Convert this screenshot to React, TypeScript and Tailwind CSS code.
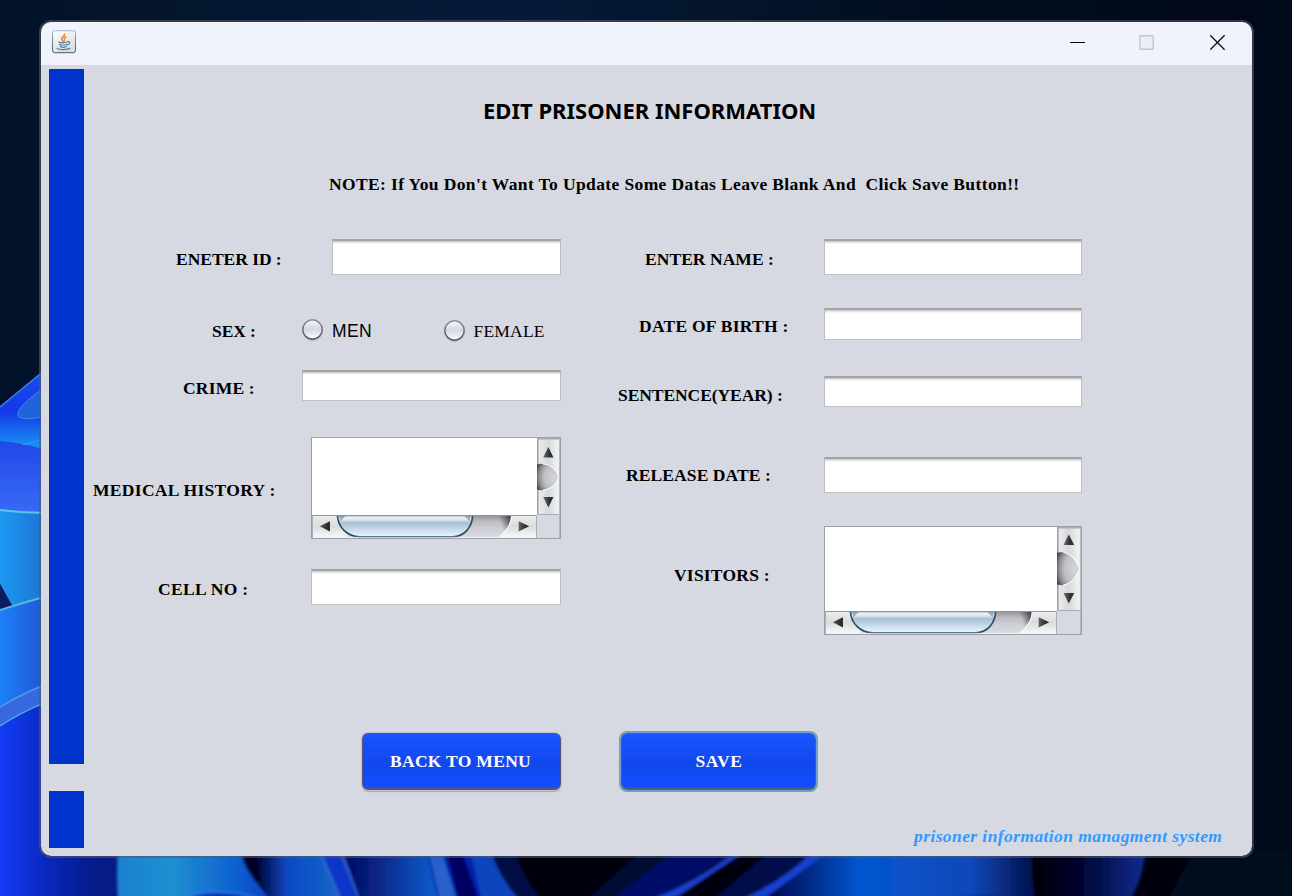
import { useId } from "react";
import clsx from "clsx";

const serif = "font-['Liberation_Serif',serif]";

function Wallpaper() {
  return (
    <svg className="absolute inset-0 h-[896px] w-[1292px]" viewBox="0 0 1292 896" aria-hidden="true">
      <defs>
        <filter id="soft" x="-5%" y="-5%" width="110%" height="110%">
          <feGaussianBlur stdDeviation="1.6" />
        </filter>
        <linearGradient id="sky" x1="0" y1="0" x2="1" y2="0">
          <stop offset="0" stopColor="#02112a" />
          <stop offset="0.08" stopColor="#04142c" />
          <stop offset="0.4" stopColor="#061a38" />
          <stop offset="0.75" stopColor="#010d1d" />
          <stop offset="1" stopColor="#01081a" />
        </linearGradient>
        <linearGradient id="petalA" x1="0" y1="0" x2="0" y2="1">
          <stop offset="0" stopColor="#1c50e8" />
          <stop offset="0.5" stopColor="#1436e8" />
          <stop offset="1" stopColor="#1a9af4" />
        </linearGradient>
        <linearGradient id="petalB" x1="0" y1="0" x2="0" y2="1">
          <stop offset="0" stopColor="#2048e8" />
          <stop offset="1" stopColor="#3a6af6" />
        </linearGradient>
        <linearGradient id="petalC" x1="0" y1="0" x2="1" y2="0">
          <stop offset="0" stopColor="#1c9af4" />
          <stop offset="1" stopColor="#1c74d0" />
        </linearGradient>
        <linearGradient id="petalD" x1="0" y1="0" x2="1" y2="0">
          <stop offset="0" stopColor="#1c80fa" />
          <stop offset="1" stopColor="#2058d0" />
        </linearGradient>
        <linearGradient id="petalE" x1="0" y1="0" x2="1" y2="0">
          <stop offset="0" stopColor="#143cf8" />
          <stop offset="0.3" stopColor="#0a28c0" />
          <stop offset="0.6" stopColor="#051c8c" />
          <stop offset="1" stopColor="#041878" />
        </linearGradient>
        <linearGradient id="b1" x1="0" y1="0" x2="1" y2="0">
          <stop offset="0" stopColor="#1e80d0" />
          <stop offset="0.35" stopColor="#1f90d0" />
          <stop offset="0.8" stopColor="#0c5cd0" />
          <stop offset="1" stopColor="#083cc0" />
        </linearGradient>
        <linearGradient id="b2" x1="0" y1="0" x2="1" y2="0">
          <stop offset="0" stopColor="#02083c" />
          <stop offset="0.35" stopColor="#0c48c4" />
          <stop offset="1" stopColor="#1468c8" />
        </linearGradient>
        <linearGradient id="b3" x1="0" y1="0" x2="1" y2="0">
          <stop offset="0" stopColor="#03055c" />
          <stop offset="1" stopColor="#1060d0" />
        </linearGradient>
        <linearGradient id="b4" x1="0" y1="0" x2="1" y2="0">
          <stop offset="0" stopColor="#020244" />
          <stop offset="0.35" stopColor="#0456d0" />
          <stop offset="0.75" stopColor="#0c48b8" />
          <stop offset="1" stopColor="#02083c" />
        </linearGradient>
        <linearGradient id="b5" x1="0" y1="0" x2="1" y2="0">
          <stop offset="0" stopColor="#000008" />
          <stop offset="0.4" stopColor="#01022c" />
          <stop offset="1" stopColor="#0c2c90" />
        </linearGradient>
      </defs>
      <rect width="1292" height="896" fill="url(#sky)" />
      <rect x="1250" y="0" width="42" height="896" fill="#010a1a" />

      <path d="M0 407Q24 387 44 371V450H0Z" fill="url(#petalA)" />
      <path d="M0 407Q24 387 44 371" fill="none" stroke="#3a88e8" strokeWidth="1.5" />
      <path d="M44 388Q12 410 19 417Q28 421 44 416Z" fill="#2064dc" stroke="#4088f0" />
      <path d="M0 441Q22 443 44 449V514H0Z" fill="url(#petalB)" />
      <path d="M22 445Q32 443 44 439" fill="none" stroke="#3c98e8" />
      <path d="M0 510Q22 513 44 513V600L12 606L0 584Z" fill="url(#petalC)" />
      <path d="M0 510Q22 513 44 513" fill="none" stroke="#58c8f0" strokeWidth="2" />
      <path d="M0 584L13 607L0 611Z" fill="#0c1c60" />
      <path d="M0 610Q22 603 44 597V688L0 709Z" fill="url(#petalD)" />
      <path d="M0 610Q22 603 44 597" fill="none" stroke="#50b8e8" strokeWidth="2" />
      <path d="M0 706Q20 694 44 685V704Q20 714 0 727Z" fill="#3868e0" />
      <path d="M0 707Q20 695 44 685M0 726Q20 713 44 703" fill="none" stroke="#48a0e8" strokeWidth="1.5" />
      <path d="M0 727Q20 714 44 704V856H150V896H0Z" fill="url(#petalE)" />

      <g filter="url(#soft)">
        <path d="M118 850H242Q240 868 272 900H118Q116 872 118 850Z" fill="url(#b1)" />
        <path d="M240 850H330V900H272Q246 874 240 850Z" fill="#010528" />
        <path d="M258 850H322L342 900H270Q256 876 258 850Z" fill="url(#b2)" />
        <path d="M180 900Q215 884 264 900Z" fill="#0830b8" stroke="#2c80ec" strokeWidth="1.5" />
        <path d="M319 850H341L360 900H340Z" fill="#1034c8" />
        <path d="M319 850L341 900M340 850L360 900" fill="none" stroke="#2c68d0" strokeWidth="2.5" />
        <path d="M342 850H428L440 900H360Z" fill="url(#b3)" />
        <path d="M426 850H516Q522 872 540 900H438Z" fill="#0620b0" />
        <path d="M428 850H441L457 900H440Z" fill="#2c60cc" />
        <path d="M446 850H462L479 900H458Z" fill="#030664" />
        <path d="M470 850H490Q500 878 519 900H482Z" fill="#1144bc" />
        <path d="M490 850H516Q522 872 542 900H519Q500 878 490 850Z" fill="#030a44" />
        <path d="M514 850H720V900H542Q522 876 514 850Z" fill="#000008" />
        <path d="M640 852H675L613 900H586Z" fill="#020730" />
        <path d="M675 852H735L656 900H611Z" fill="#031068" />
        <path d="M735 852Q700 880 650 900H672Q712 882 744 852Z" fill="#1a40d0" />
        <path d="M744 852H814L760 900H672Z" fill="#01010c" />
        <path d="M770 852H812L762 900H712Z" fill="#020a48" />
        <path d="M812 852Q785 880 740 900H766L828 852Z" fill="#1840d0" />
        <path d="M828 852H1034Q1030 880 1042 900H762Z" fill="url(#b4)" />
        <path d="M1032 850H1145Q1143 876 1130 900H1036Q1030 880 1032 850Z" fill="url(#b5)" />
        <path d="M940 900Q1000 890 1040 900Z" fill="#0c24a0" />
        <path d="M1145 850H1196L1168 900H1130Q1144 876 1145 850Z" fill="#010010" />
        <path d="M1194 850H1300V900H1168Z" fill="#020d1c" />
      </g>
    </svg>
  );
}

function JavaIcon() {
  return (
    <svg className="h-6 w-6" viewBox="0 0 24 24" aria-hidden="true">
      <defs>
        <linearGradient id="javaBg" x1="0" y1="0" x2="0.4" y2="1">
          <stop offset="0" stopColor="#ffffff" />
          <stop offset="1" stopColor="#dcdcdc" />
        </linearGradient>
        <linearGradient id="javaEdge" x1="0" y1="0" x2="0" y2="1">
          <stop offset="0" stopColor="#9db6c8" />
          <stop offset="1" stopColor="#3d5a70" />
        </linearGradient>
      </defs>
      <rect x="0.5" y="0.7" width="23" height="22" rx="2" fill="url(#javaBg)" stroke="url(#javaEdge)" />
      <g fill="none" strokeLinecap="round">
        <path d="M12.6 4.2C13 6.2 9.2 7 9.6 9C9.8 10 10.8 10.3 11 11.2M14.2 6.8C12.4 7.5 11.6 8.3 12.4 9.4C12.8 10.1 12.3 10.8 11.9 11.2" stroke="#ec8a34" strokeWidth="1.5" />
        <path d="M7 12C8 13 14 12.8 15 12M7.4 14.2C9 15.3 13.2 15.2 14.6 14.4M8.2 16.5C10 17.5 12.6 17.3 14 16.6M15.4 11.6C18.6 10.9 18.2 14.2 15.2 14.8M5 18.6C7 20 15.6 19.8 17.8 18.3" stroke="#5580a4" strokeWidth="1.2" />
      </g>
    </svg>
  );
}

function TitleBar() {
  return (
    <header className="flex h-[43px] shrink-0 items-start justify-between bg-[#f0f3fb] pl-[11px] pr-[26px] pt-[8px]">
      <JavaIcon />
      <div className="flex items-center gap-[53px] pt-[4px]">
        <svg className="h-4 w-4" viewBox="0 0 16 16" aria-label="Minimize">
          <rect x="0" y="8" width="15" height="1" fill="#000" />
        </svg>
        <svg className="h-4 w-4" viewBox="0 0 16 16" aria-label="Maximize">
          <rect x="0.9" y="1.8" width="13.4" height="13.4" rx="1" fill="#eceef5" stroke="#c3c5cb" strokeWidth="1.4" />
        </svg>
        <svg className="ml-[2px] h-4 w-4" viewBox="0 0 16 16" aria-label="Close">
          <path d="M0.2 1.3L14.6 15.7M14.6 1.3L0.2 15.7" stroke="#111" strokeWidth="1.4" />
        </svg>
      </div>
    </header>
  );
}

function Label({ text, className }: { text: string; className: string }) {
  return (
    <label className={clsx(serif, "whitespace-pre text-[17.5px] font-bold leading-[21px] text-black", className)}>{text}</label>
  );
}

function Field({ className }: { className: string }) {
  return (
    <input
      type="text"
      className={clsx(
        "block h-full border-x border-b border-t-2 border-b-[#c0c0c2] border-l-[#bcbcc0] border-r-[#bcbcc0] border-t-[#a2a3a6] bg-white shadow-[inset_0_1px_0_#cfcfd0,inset_0_2px_0_#e6e6e6,inset_0_3px_0_#f7f7f7] outline-none",
        className,
      )}
    />
  );
}

function Radio({ text, className, textClass }: { text: string; className: string; textClass: string }) {
  const id = useId();
  return (
    <label className={clsx("flex items-start", className)}>
      <svg className="-mt-px h-[23px] w-[22px]" viewBox="0 0 22 23">
        <defs>
          <linearGradient id={id} x1="0" y1="0" x2="0" y2="1">
            <stop offset="0" stopColor="#f6f7fa" />
            <stop offset="0.5" stopColor="#d6d8e0" />
            <stop offset="1" stopColor="#fdfdff" />
          </linearGradient>
          <linearGradient id={id + "e"} x1="0" y1="0" x2="0" y2="1">
            <stop offset="0" stopColor="#8c8e96" />
            <stop offset="1" stopColor="#484b54" />
          </linearGradient>
        </defs>
        <circle cx="10.5" cy="11.5" r="10" fill="none" stroke="#bcbfc8" strokeWidth="1.3" />
        <circle cx="10.5" cy="10.5" r="9.7" fill={`url(#${id})`} stroke={`url(#${id}e)`} strokeWidth="1.4" />
      </svg>
      <span className={clsx("leading-5 text-black", textClass)}>{text}</span>
    </label>
  );
}

function VerticalBar({ h, up, top, bottom, down }: { h: number; up: number; top: number; bottom: number; down: number }) {
  const id = useId();
  const mid = (top + bottom) / 2;
  const groove = `M-1 ${top}H5C13 ${top} 19 ${mid - 8} 21.5 ${mid}C19 ${mid + 8} 13 ${bottom} 5 ${bottom}H-1Z`;
  return (
    <svg className="block h-full w-full" viewBox={`0 0 23 ${h}`} preserveAspectRatio="none">
      <defs>
        <linearGradient id={id + "f"} x1="0" y1="0" x2="1" y2="0">
          <stop offset="0" stopColor="#eceeef" />
          <stop offset="0.5" stopColor="#d6d9dc" />
          <stop offset="1" stopColor="#f6f8f9" />
        </linearGradient>
        <radialGradient id={id + "g"} cx="0.8" cy="0.5" r="0.9">
          <stop offset="0" stopColor="#d4d5da" />
          <stop offset="0.5" stopColor="#bfc0c5" />
          <stop offset="0.75" stopColor="#8c8d92" />
          <stop offset="1" stopColor="#303134" />
        </radialGradient>
        <linearGradient id={id + "a"} x1="0" y1="0" x2="1" y2="0">
          <stop offset="0" stopColor="#707070" />
          <stop offset="0.6" stopColor="#303030" />
        </linearGradient>
      </defs>
      <rect width="23" height={h} fill={`url(#${id}f)`} />
      <path d={`M0.75 0V${h}`} stroke="#9d9ea2" strokeWidth="1.5" />
      <path d="M0 0.75H23" stroke="#a9abae" strokeWidth="1.5" />
      <path d={`M0 ${h - 0.5}H23`} stroke="#a9abae" />
      <path d={`M22.4 0V${h}`} stroke="#b4b6be" />
      <path d={groove} fill={`url(#${id}g)`} stroke="#f6f7f8" strokeWidth="1.2" />
      <path d={`M0 ${top + 0.3}H6M0 ${bottom - 0.3}H6`} stroke="#4a4b4e" strokeWidth="0.9" />
      <path d={`M11.3 ${up}L16.5 ${up + 10.5}H6.2Z`} fill={`url(#${id}a)`} />
      <path d={`M11.3 ${down + 10.5}L16.5 ${down}H6.2Z`} fill={`url(#${id}a)`} />
    </svg>
  );
}

function HorizontalBar({ w, left, thumbEnd, trackEnd, right }: { w: number; left: number; thumbEnd: number; trackEnd: number; right: number }) {
  const id = useId();
  const e = thumbEnd;
  const thumb = `M${left} 0C${left} 12 ${left + 10} 21.7 ${left + 22} 21.7H${e - 20}C${e - 8} 21.7 ${e} 12 ${e} 0Z`;
  return (
    <svg className="block h-full w-full" viewBox={`0 0 ${w} 23`} preserveAspectRatio="none">
      <defs>
        <linearGradient id={id + "f"} x1="0" y1="0" x2="0" y2="1">
          <stop offset="0" stopColor="#eceeef" />
          <stop offset="0.5" stopColor="#d9dcde" />
          <stop offset="1" stopColor="#f8fafa" />
        </linearGradient>
        <linearGradient id={id + "t"} x1="0" y1="0" x2="0" y2="1">
          <stop offset="0" stopColor="#a8bccb" />
          <stop offset="0.14" stopColor="#eef4f8" />
          <stop offset="0.24" stopColor="#d4dfe8" />
          <stop offset="0.36" stopColor="#a9bfd2" />
          <stop offset="0.65" stopColor="#c4d9e8" />
          <stop offset="1" stopColor="#e6f8fe" />
        </linearGradient>
        <linearGradient id={id + "g"} x1="0" y1="0" x2="0" y2="1">
          <stop offset="0" stopColor="#8f9094" />
          <stop offset="0.3" stopColor="#bcbdc1" />
          <stop offset="0.6" stopColor="#cdced3" />
          <stop offset="1" stopColor="#d9dbe0" />
        </linearGradient>
        <linearGradient id={id + "s"} x1="0" y1="0.5" x2="1" y2="0.2">
          <stop offset="0.45" stopColor="#404145" stopOpacity="0" />
          <stop offset="1" stopColor="#303134" stopOpacity="0.85" />
        </linearGradient>
        <linearGradient id={id + "a"} x1="0" y1="0" x2="1" y2="0">
          <stop offset="0" stopColor="#606060" />
          <stop offset="0.7" stopColor="#2c2c2c" />
        </linearGradient>
      </defs>
      <rect width={w} height="23" fill={`url(#${id}f)`} />
      <path d={`M${left + 10} 0H${trackEnd}C${trackEnd} 9 ${trackEnd - 4} 15 ${trackEnd - 12} 22H${left + 10}Z`} fill={`url(#${id}g)`} />
      <path d={`M${trackEnd - 20} 0H${trackEnd}C${trackEnd} 9 ${trackEnd - 4} 14 ${trackEnd - 10} 18Q${trackEnd - 7} 6 ${trackEnd - 20} 0Z`} fill={`url(#${id}s)`} />
      <path d={`M${trackEnd + 0.6} 1C${trackEnd + 0.6} 9 ${trackEnd - 4} 16 ${trackEnd - 12} 22`} fill="none" stroke="#f6f7f8" strokeWidth="1.2" />
      <path d={thumb} fill={`url(#${id}t)`} stroke="#2d4a60" strokeWidth="1.6" />
      <path d={`M${left + 1.5} 1H${left + 8}L${left + 3} 6ZM${e - 1.5} 1H${e - 8}L${e - 3} 6Z`} fill="#5f7f99" opacity="0.6" />
      <path d={`M0 0.5H${w}`} stroke="#8f9298" />
      <path d={`M0 22.4H${w}`} stroke="#eef1f3" />
      <path d={`M${left + 20} 21.7H${e - 18}`} stroke="#58758b" strokeWidth="1.2" />
      <path d={`M${w - 0.5} 0V23M0.5 0V23`} stroke="#aeb0b4" />
      <path d="M7.7 11.3L18 6.2V16.4Z" fill={`url(#${id}a)`} />
      <path d={`M${right + 10.5} 11.3L${right} 6.2V16.4Z`} fill={`url(#${id}a)`} />
    </svg>
  );
}

function MedicalArea() {
  return (
    <div className="grid h-[102px] w-[250px] grid-cols-[225px_23px] grid-rows-[77px_23px] border border-[#9c9fa8]">
      <textarea className="block h-full w-full resize-none bg-white outline-none" />
      <VerticalBar h={77} up={9} top={26} bottom={52} down={59} />
      <HorizontalBar w={225} left={25.5} thumbEnd={160.5} trackEnd={199} right={206.7} />
      <div className="border-r border-[#b4b6be] bg-[#d6d9e1]" />
    </div>
  );
}

function VisitorsArea() {
  return (
    <div className="grid h-[109px] w-[258px] grid-cols-[232px_24px] grid-rows-[84px_23px] border border-[#9c9fa8]">
      <textarea className="block h-full w-full resize-none bg-white outline-none" />
      <VerticalBar h={84} up={7.5} top={25.5} bottom={58} down={66} />
      <HorizontalBar w={232} left={25.5} thumbEnd={170.5} trackEnd={206.7} right={213.7} />
      <div className="border-r border-[#b4b6be] bg-[#d6d9e1]" />
    </div>
  );
}

function LeftColumn() {
  return (
    <div className="flex w-[477px] flex-col">
      <div className="flex h-9 justify-between">
        <Label text="ENETER ID :" className="ml-[92px] pt-[10px] tracking-[-0.03px]" />
        <Field className="w-[229px]" />
      </div>
      <div className="mt-[45px] flex h-[22px]">
        <Label text="SEX :" className="ml-[128px] w-[90px] pt-px tracking-[-0.1px]" />
        <Radio
          text="MEN"
          className="w-[142px]"
          textClass="ml-[8px] mt-px text-[17.5px] tracking-[0.4px] font-['Liberation_Sans',sans-serif]"
        />
        <Radio
          text="FEMALE"
          className="mt-px"
          textClass="ml-[7.5px] text-[17.5px] tracking-[0.2px] font-['Liberation_Serif',serif]"
        />
      </div>
      <div className="mt-7 flex h-[31px] justify-between">
        <Label text="CRIME :" className="ml-[99px] pt-[8px] tracking-[0.2px]" />
        <Field className="w-[259px]" />
      </div>
      <div className="mt-9 flex h-[102px] justify-between">
        <Label text="MEDICAL HISTORY :" className="ml-[9px] pt-[43px] tracking-[0.31px]" />
        <MedicalArea />
      </div>
      <div className="mt-[30px] flex h-9 justify-between">
        <Label text="CELL NO :" className="ml-[74px] pt-[10px] tracking-[0.33px]" />
        <Field className="w-[250px]" />
      </div>
    </div>
  );
}

function RightColumn() {
  return (
    <div className="flex w-[521px] flex-col">
      <div className="flex h-9 justify-between">
        <Label text="ENTER NAME :" className="ml-[84px] pt-[10px] tracking-[0.05px]" />
        <Field className="w-[258px]" />
      </div>
      <div className="mt-[33px] flex h-8 justify-between">
        <Label text="DATE OF BIRTH :" className="ml-[78px] pt-[8px] tracking-[0.26px]" />
        <Field className="w-[258px]" />
      </div>
      <div className="mt-9 flex h-[31px] justify-between">
        <Label text="SENTENCE(YEAR) :" className="ml-[57px] pt-[9px] tracking-[-0.07px]" />
        <Field className="w-[258px]" />
      </div>
      <div className="mt-[50px] flex h-9 justify-between">
        <Label text="RELEASE DATE :" className="ml-[65px] pt-[8px] tracking-[0.1px]" />
        <Field className="w-[258px]" />
      </div>
      <div className="mt-[33px] flex h-[109px] justify-between">
        <Label text="VISITORS :" className="ml-[113px] pt-[39px] tracking-[0.22px]" />
        <VisitorsArea />
      </div>
    </div>
  );
}

const buttonBase =
  "bg-linear-to-b from-[#1a54ff] via-[#1147ec] via-60% to-[#144eff] pb-px text-center text-[17.5px] font-bold leading-5 text-white font-['Liberation_Serif',serif]";

export default function App() {
  return (
    <div className="relative h-[896px] w-[1292px] overflow-hidden bg-[#020d20] pl-[41px] pt-[22px]">
      <Wallpaper />
      <main className="relative flex h-[834px] w-[1211px] flex-col overflow-hidden rounded-[10px] bg-[#d6d9e1] outline-2 outline-[#555861]/60">
        <TitleBar />
        <div className="flex flex-1">
          <aside className="ml-2 flex w-[35px] shrink-0 flex-col gap-[27px] pt-1">
            <div className="h-[695px] bg-[#0033cc]" />
            <div className="h-[57px] bg-[#0033cc]" />
          </aside>
          <section className="flex flex-1 flex-col">
            <h1 className="ml-[399px] mt-[30px] h-[30px] whitespace-pre font-['Noto_Sans',sans-serif] text-[22px] font-bold leading-[30px] text-black">
              EDIT PRISONER INFORMATION
            </h1>
            <p className="ml-[245px] mt-[49px] h-5 whitespace-pre font-['Liberation_Serif',serif] text-[17.5px] font-bold leading-[21px] tracking-[0.38px] text-black">
              {"NOTE: If You Don't Want To Update Some Datas Leave Blank And  Click Save Button!!"}
            </p>
            <div className="mt-[45px] flex h-[396px]">
              <LeftColumn />
              <RightColumn />
            </div>
            <div className="ml-[278px] mt-[98px] flex items-center gap-[60px]">
              <button
                type="button"
                className={clsx(
                  buttonBase,
                  "h-[57px] w-[199px] rounded-[6px] border border-b-2 border-[#50587c] pr-[2px] tracking-[0.3px] shadow-[0_0_0_1px_#c0c3cb,0_2px_1px_#a4a7b0]",
                )}
              >
                BACK TO MENU
              </button>
              <button
                type="button"
                className={clsx(
                  buttonBase,
                  "h-[57px] w-[195px] rounded-[6px] border border-b-2 border-[#50607c] pl-px tracking-[0.7px] shadow-[0_0_0_2px_#70a0c8]",
                )}
              >
                SAVE
              </button>
            </div>
            <p className="ml-[830px] mt-[36px] h-5 whitespace-pre font-['Liberation_Serif',serif] text-[17.5px] font-bold italic leading-5 tracking-[0.41px] text-[#3399ff]">
              prisoner information managment system
            </p>
          </section>
        </div>
      </main>
    </div>
  );
}
